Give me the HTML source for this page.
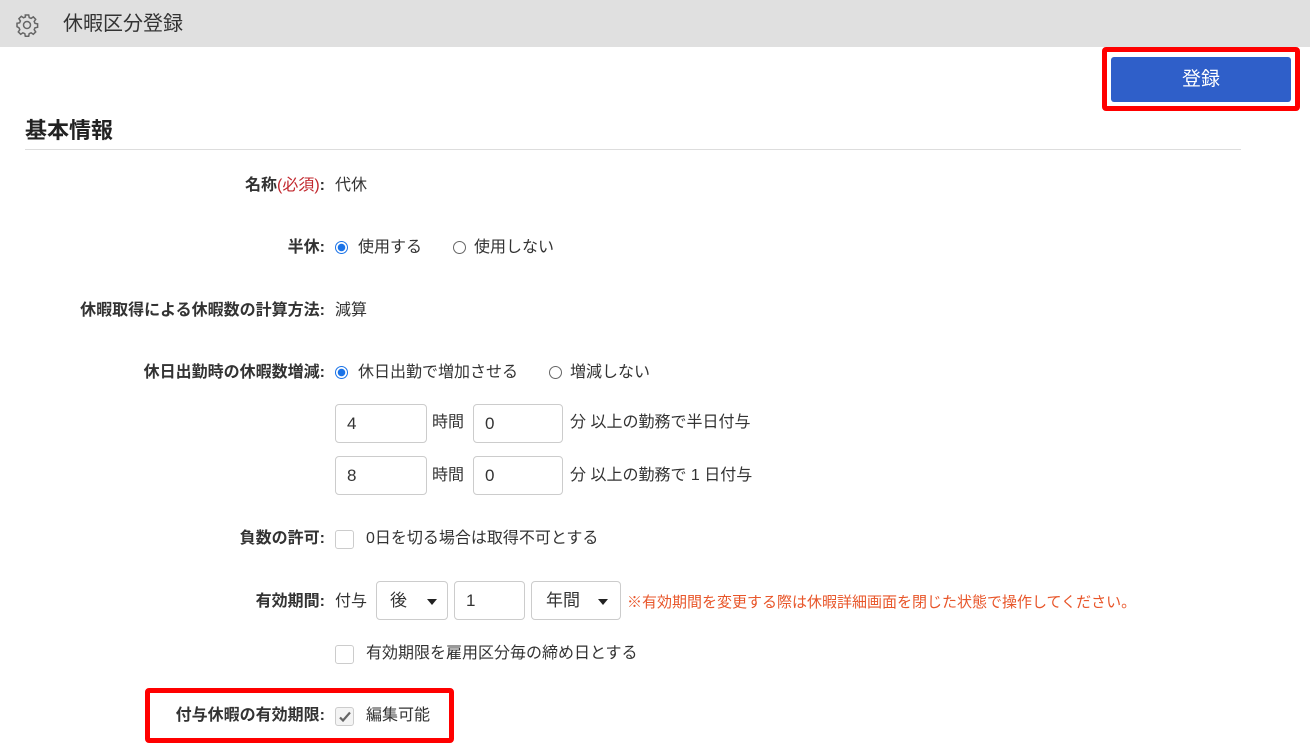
<!DOCTYPE html>
<html><head><meta charset="utf-8"><style>
body{margin:0;width:1310px;height:748px;background:#fff;font-family:"Liberation Sans","Noto Sans CJK JP",sans-serif;color:#333;position:relative;overflow:hidden;font-size:16px}
.a{position:absolute;white-space:nowrap;line-height:20px}
.hdr{position:absolute;left:0;top:0;width:1310px;height:47px;background:#e0e0e0}
.lbl{position:absolute;right:985px;font-weight:bold;color:#333;white-space:nowrap;line-height:20px}
.inp{position:absolute;border:1px solid #ccc;border-radius:4px;box-sizing:border-box;height:39px;line-height:37px;padding-left:11px;font-size:17px;color:#333}
.rad{position:absolute;width:13px;height:13px;border-radius:50%;box-sizing:border-box}
.on{border:1px solid #1a73e8;background:radial-gradient(circle,#1a73e8 3.5px,#fff 4px)}
.off{border:1px solid #666;background:#fff}
.cb{position:absolute;width:19px;height:19px;border:1px solid #ccc;border-radius:3px;box-sizing:border-box;background:#fff}
.red{position:absolute;border:5px solid #f00;border-radius:4px;box-sizing:border-box}
.caret{position:absolute;width:0;height:0;border-left:5px solid transparent;border-right:5px solid transparent;border-top:6px solid #222}
</style></head><body>
<div class="hdr"></div>
<svg style="position:absolute;left:15px;top:13px" width="24" height="24" viewBox="0 0 24 24" fill="none" stroke="#666" stroke-width="1.5"><path d="M10.3 2h3.4l.5 2.6 1.9.8 2.2-1.5 2.4 2.4-1.5 2.2.8 1.9 2.6.5v3.4l-2.6.5-.8 1.9 1.5 2.2-2.4 2.4-2.2-1.5-1.9.8-.5 2.6h-3.4l-.5-2.6-1.9-.8-2.2 1.5-2.4-2.4 1.5-2.2-.8-1.9L2 13.7v-3.4l2.6-.5.8-1.9-1.5-2.2 2.4-2.4 2.2 1.5 1.9-.8z"/><circle cx="12" cy="12" r="3.5"/></svg>
<div class="a" style="left:63px;top:14px;font-size:20px;color:#333">休暇区分登録</div>
<div class="red" style="left:1102px;top:47px;width:198px;height:64px"></div>
<div style="position:absolute;left:1111px;top:57px;width:180px;height:45px;background:#2f5fc9;border-radius:3px;color:#fff;font-size:19px;text-align:center;line-height:45px">登録</div>
<div class="a" style="left:25px;top:117px;font-size:22px;font-weight:bold;line-height:28px;color:#222">基本情報</div>
<div style="position:absolute;left:25px;top:149px;width:1216px;height:1px;background:#ddd"></div>

<div class="lbl" style="top:176px">名称<span style="color:#c1272d;font-weight:normal">(必須)</span>:</div>
<div class="a" style="left:335px;top:176px">代休</div>

<div class="lbl" style="top:238px">半休:</div>
<div class="rad on" style="left:335px;top:241px"></div><div class="a" style="left:358px;top:238px">使用する</div>
<div class="rad off" style="left:453px;top:241px"></div><div class="a" style="left:474px;top:238px">使用しない</div>

<div class="lbl" style="top:301px">休暇取得による休暇数の計算方法:</div>
<div class="a" style="left:335px;top:301px">減算</div>

<div class="lbl" style="top:363px">休日出勤時の休暇数増減:</div>
<div class="rad on" style="left:335px;top:366px"></div><div class="a" style="left:358px;top:363px">休日出勤で増加させる</div>
<div class="rad off" style="left:549px;top:366px"></div><div class="a" style="left:570px;top:363px">増減しない</div>

<div class="inp" style="left:335px;top:404px;width:92px">4</div>
<div class="a" style="left:432px;top:413px">時間</div>
<div class="inp" style="left:473px;top:404px;width:90px">0</div>
<div class="a" style="left:570px;top:413px">分 以上の勤務で半日付与</div>
<div class="inp" style="left:335px;top:456px;width:92px">8</div>
<div class="a" style="left:432px;top:466px">時間</div>
<div class="inp" style="left:473px;top:456px;width:90px">0</div>
<div class="a" style="left:570px;top:466px">分 以上の勤務で 1 日付与</div>

<div class="lbl" style="top:529px">負数の許可:</div>
<div class="cb" style="left:335px;top:530px"></div>
<div class="a" style="left:366px;top:529px">0日を切る場合は取得不可とする</div>

<div class="lbl" style="top:592px">有効期間:</div>
<div class="a" style="left:335px;top:592px">付与</div>
<div class="inp" style="left:376px;top:581px;width:72px;padding-left:13px">後</div><div class="caret" style="left:427px;top:599px"></div>
<div class="inp" style="left:454px;top:581px;width:71px">1</div>
<div class="inp" style="left:531px;top:581px;width:90px;padding-left:14px">年間</div><div class="caret" style="left:598px;top:599px"></div>
<div class="a" style="left:627px;top:593px;color:#e8562a;font-size:15px">※有効期間を変更する際は休暇詳細画面を閉じた状態で操作してください。</div>

<div class="cb" style="left:335px;top:645px"></div>
<div class="a" style="left:366px;top:644px">有効期限を雇用区分毎の締め日とする</div>

<div class="red" style="left:145px;top:688px;width:309px;height:55px"></div>
<div class="lbl" style="top:706px">付与休暇の有効期限:</div>
<div class="cb" style="left:335px;top:707px;background:#f4f4f4"></div>
<svg style="position:absolute;left:338px;top:710px" width="14" height="14" viewBox="0 0 14 14"><path d="M2 7.5l3 3 7-8" fill="none" stroke="#666" stroke-width="2.2"/></svg>
<div class="a" style="left:366px;top:706px">編集可能</div>
</body></html>
